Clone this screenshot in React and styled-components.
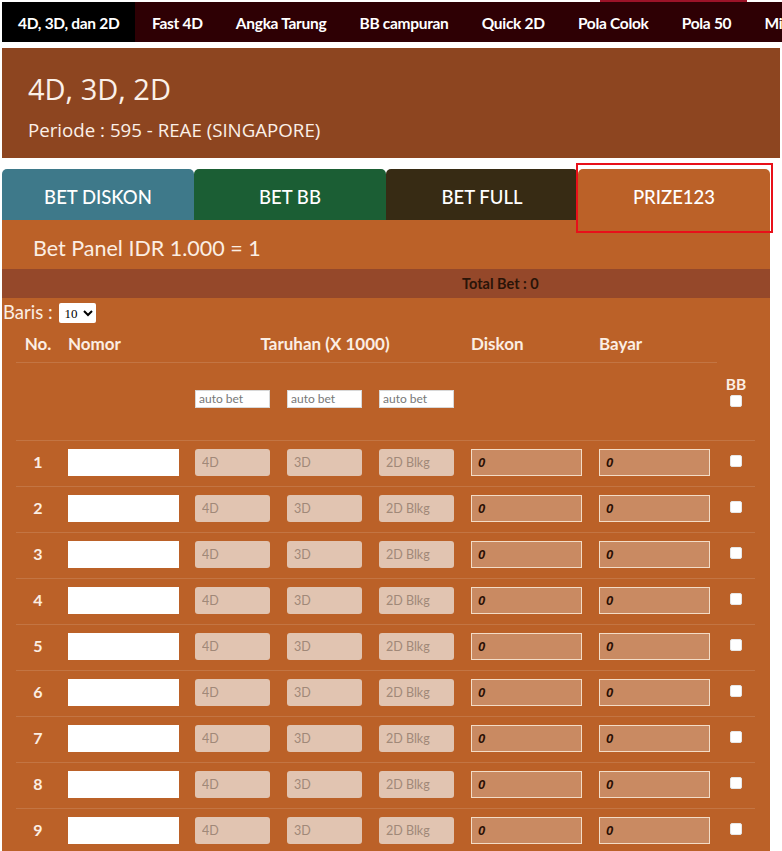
import React from 'react';
import styled, { createGlobalStyle } from 'styled-components';

const GlobalStyle = createGlobalStyle`
  html, body {
    margin: 0;
    background: #fff;
    overflow-x: hidden;
  }
`;

const Page = styled.div`
  width: 782px;
  overflow: hidden;
  padding: 2px 0 0 2px;
  box-sizing: border-box;
`;

const Nav = styled.nav`
  position: relative;
  display: flex;
  width: max-content;
  height: 40px;
  background: #2e0004;
  margin-bottom: 6px;
  &::after {
    content: '';
    position: absolute;
    top: -2px;
    left: 598px;
    width: 147px;
    height: 2px;
    background: #9c1328;
  }
`;

const NavItem = styled.a`
  display: block;
  padding: 3px 16.6px 0;
  line-height: 37px;
  font-family: Lato, "Liberation Sans", sans-serif;
  font-weight: 700;
  font-size: 15.5px;
  letter-spacing: -0.3px;
  color: #fff;
  white-space: nowrap;
  text-decoration: none;
  background: ${p => (p.$active ? '#000' : 'transparent')};
  &:first-child {
    padding: 3px 16px 0;
  }
`;

const Header = styled.header`
  width: 778px;
  height: 110px;
  box-sizing: border-box;
  padding: 22px 26px 0;
  background: #8d4520;
  color: #fbf0e8;
  font-family: "Open Sans", sans-serif;
`;

const Title = styled.h1`
  margin: 0;
  font-weight: 400;
  font-size: 29px;
  line-height: 38px;
`;

const Periode = styled.p`
  margin: 10px 0 0;
  font-size: 18.7px;
  line-height: 24px;
`;

const TabsWrap = styled.div`
  position: relative;
  width: 768px;
  margin-top: 11px;
`;

const Tabs = styled.div`
  display: grid;
  grid-template-columns: repeat(4, 1fr);
  height: 51px;
`;

const Tab = styled.div`
  display: flex;
  align-items: center;
  justify-content: center;
  padding-top: 4px;
  border-radius: 5px 5px 0 0;
  background: ${p => p.$bg};
  color: #fff;
  font-family: Lato, "Liberation Sans", sans-serif;
  font-size: 18.5px;
  font-weight: 500;
`;

const Highlight = styled.div`
  position: absolute;
  left: 574px;
  top: -6px;
  width: 197px;
  height: 70px;
  box-sizing: border-box;
  border: 2px solid #e8101a;
  pointer-events: none;
`;

const Panel = styled.section`
  width: 768px;
  background: #bb6128;
  color: #fbeee3;
  font-family: Lato, "Liberation Sans", sans-serif;
  padding-bottom: 20px;
`;

const PanelTitle = styled.div`
  height: 49px;
  box-sizing: border-box;
  padding: 15px 0 0 31px;
  font-size: 21.5px;
  line-height: 26px;
`;

const TotalBar = styled.div`
  height: 29px;
  display: flex;
  align-items: center;
  padding-left: 460px;
  background: #95482a;
  color: #2a1408;
  font-size: 14.5px;
  font-weight: 700;
`;

const BarisRow = styled.div`
  display: flex;
  align-items: center;
  gap: 6px;
  height: 27px;
  padding-left: 1px;
  font-size: 18.5px;
`;

const Select = styled.select`
  height: 20px;
  margin-top: 3px;
  border: none;
  border-radius: 2px;
  background: #fff;
  font-family: "Liberation Serif", serif;
  font-size: 13px;
  padding: 0 2px;
`;

const Table = styled.div`
  margin-left: 14px;
  width: 739px;
`;

const cols = '44px 127px 92px 92px 92px 128px 126px 38px';

const HeadRow = styled.div`
  display: grid;
  grid-template-columns: 44px 127px 276px 128px 126px;
  height: 38px;
  align-items: center;
  margin-right: 38px;
  border-bottom: 1px solid rgba(255, 255, 255, 0.13);
  font-weight: 700;
  font-size: 17px;
  box-sizing: border-box;
`;

const HeadCell = styled.div`
  padding-left: ${p => (p.$center ? 0 : 8)}px;
  text-align: ${p => (p.$center ? 'center' : 'left')};
`;

const AutoRow = styled.div`
  display: grid;
  grid-template-columns: ${cols};
  height: 77px;
  box-sizing: border-box;
`;

const AutoCell = styled.div`
  padding: 24px 0 0 8px;
`;

const AutoInput = styled.input`
  width: 75px;
  height: 18px;
  box-sizing: border-box;
  border: 1px solid #d8d8d8;
  background: #fff;
  padding: 0 3px;
  font-family: Lato, sans-serif;
  font-size: 12px;
  &::placeholder { color: #777; }
`;

const BBCell = styled.div`
  grid-column: 8;
  display: flex;
  flex-direction: column;
  align-items: center;
  padding-top: 12px;
  gap: 2px;
  font-weight: 700;
  font-size: 15.5px;
`;

const Row = styled.div`
  display: grid;
  grid-template-columns: ${cols};
  align-items: center;
  height: 46px;
  box-sizing: border-box;
  border-top: 1px solid rgba(255, 255, 255, 0.13);
  padding-bottom: 2px;
`;

const Num = styled.div`
  text-align: center;
  font-weight: 700;
  font-size: 16px;
  padding-bottom: 3px;
`;

const Cell = styled.div`
  padding-left: 8px;
  display: flex;
`;

const CheckCell = styled.div`
  display: flex;
  justify-content: center;
  padding-bottom: 4px;
`;

const NomorInput = styled.input`
  width: 111px;
  height: 27px;
  box-sizing: border-box;
  border: none;
  background: #fff;
`;

const BetInput = styled.input`
  width: 75px;
  height: 27px;
  box-sizing: border-box;
  border: none;
  border-radius: 3px;
  background: #e1c4b1;
  padding: 0 7px;
  font-family: Lato, sans-serif;
  font-size: 12.5px;
  &::placeholder { color: #a08878; }
`;

const SumInput = styled.input`
  width: 111px;
  height: 27px;
  box-sizing: border-box;
  border: 1px solid #f3dcc6;
  background: #c98a62;
  padding: 0 6px;
  color: #2a0f04;
  font-family: "Liberation Sans", sans-serif;
  font-style: italic;
  font-weight: 700;
  font-size: 13px;
`;

const Check = styled.input.attrs({ type: 'checkbox' })`
  appearance: none;
  width: 12px;
  height: 12px;
  margin: 0;
  border: 1px solid #e6e6e6;
  border-radius: 2px;
  background: #fff;
`;

const navItems = ['4D, 3D, dan 2D', 'Fast 4D', 'Angka Tarung', 'BB campuran', 'Quick 2D', 'Pola Colok', 'Pola 50', 'Mix 4D'];
const tabs = [
  { label: 'BET DISKON', bg: '#3e798a' },
  { label: 'BET BB', bg: '#1b5e34' },
  { label: 'BET FULL', bg: '#372b14' },
  { label: 'PRIZE123', bg: '#bb6128' },
];

export default function App() {
  const rows = Array.from({ length: 10 }, (_, i) => i + 1);
  return (
    <Page>
      <GlobalStyle />
      <Nav>
        {navItems.map((n, i) => (
          <NavItem key={n} $active={i === 0}>{n}</NavItem>
        ))}
      </Nav>
      <Header>
        <Title>4D, 3D, 2D</Title>
        <Periode>Periode : 595 - REAE (SINGAPORE)</Periode>
      </Header>
      <TabsWrap>
        <Tabs>
          {tabs.map(t => (
            <Tab key={t.label} $bg={t.bg}>{t.label}</Tab>
          ))}
        </Tabs>
        <Highlight />
      </TabsWrap>
      <Panel>
        <PanelTitle>Bet Panel IDR 1.000 = 1</PanelTitle>
        <TotalBar>Total Bet : 0</TotalBar>
        <BarisRow>
          Baris :
          <Select defaultValue="10">
            <option>5</option>
            <option>10</option>
            <option>20</option>
          </Select>
        </BarisRow>
        <Table>
          <HeadRow>
            <HeadCell $center>No.</HeadCell>
            <HeadCell>Nomor</HeadCell>
            <HeadCell $center>Taruhan (X 1000)</HeadCell>
            <HeadCell>Diskon</HeadCell>
            <HeadCell>Bayar</HeadCell>
          </HeadRow>
          <AutoRow>
            <div />
            <div />
            <AutoCell><AutoInput placeholder="auto bet" /></AutoCell>
            <AutoCell><AutoInput placeholder="auto bet" /></AutoCell>
            <AutoCell><AutoInput placeholder="auto bet" /></AutoCell>
            <BBCell>
              BB
              <Check />
            </BBCell>
          </AutoRow>
          {rows.map(n => (
            <Row key={n}>
              <Num>{n}</Num>
              <Cell><NomorInput /></Cell>
              <Cell><BetInput placeholder="4D" /></Cell>
              <Cell><BetInput placeholder="3D" /></Cell>
              <Cell><BetInput placeholder="2D Blkg" /></Cell>
              <Cell><SumInput readOnly value="0" /></Cell>
              <Cell><SumInput readOnly value="0" /></Cell>
              <CheckCell><Check /></CheckCell>
            </Row>
          ))}
        </Table>
      </Panel>
    </Page>
  );
}
